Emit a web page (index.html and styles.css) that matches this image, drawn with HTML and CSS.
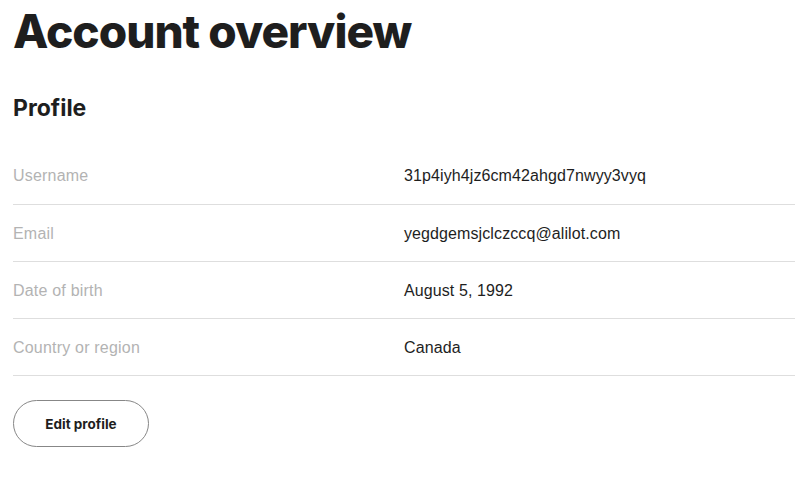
FILE: index.html
```html
<html>
<head>
<meta charset="UTF-8">
<link rel="stylesheet" href="styles.css">
</head>
<body>
<div class="pagina">
	<h1 class="titulo">Account overview</h1>
	<h2 class="subtitulo">Profile</h2>
	<table class="perfil" cellpadding="0" cellspacing="0"><tbody>
		<tr><td class="etiqueta">Username</td><td class="valor">31p4iyh4jz6cm42ahgd7nwyy3vyq</td></tr>
		<tr><td class="etiqueta">Email</td><td class="valor">yegdgemsjclczccq@alilot.com</td></tr>
		<tr><td class="etiqueta">Date of birth</td><td class="valor">August 5, 1992</td></tr>
		<tr><td class="etiqueta">Country or region</td><td class="valor">Canada</td></tr>
	</tbody></table>
	<button class="boton">Edit profile</button>
</div>
</body>
</html>
```

FILE: styles.css
```css
body{
	margin: 0;
	background-color: #ffffff;
}
.pagina{
	padding: 0 15px 0 13px;
}
.titulo{
	font-family: "Inter", sans-serif;
	font-weight: 800;
	font-size: 46px;
	letter-spacing: -1px;
	color: #1e1e1e;
	margin: 0;
	padding-top: 4px;
	line-height: 54px;
}
.subtitulo{
	font-family: "Inter", sans-serif;
	font-weight: 700;
	font-size: 23px;
	color: #1e1e1e;
	margin: 0;
	padding-top: 36px;
	line-height: 28px;
}
.perfil{
	width: 100%;
	border-collapse: collapse;
	margin-top: 25px;
}
.perfil td{
	height: 57px;
	border-bottom: 1px solid #dedede;
	font-family: "Liberation Sans", Arial, sans-serif;
	font-size: 16px;
	vertical-align: middle;
	width: 50%;
	padding: 2px 0 0 0;
}
.etiqueta{
	color: #b3b3b3;
	letter-spacing: 0.2px;
}
.valor{
	color: #1e1e1e;
	letter-spacing: 0.1px;
}
.boton{
	margin-top: 24px;
	width: 136px;
	height: 47px;
	border: 1px solid #878787;
	border-radius: 24px;
	background-color: #ffffff;
	font-family: "Inter", sans-serif;
	font-weight: 700;
	font-size: 13.5px;
	color: #1e1e1e;
	padding: 1px 0 0 0;
}
```
